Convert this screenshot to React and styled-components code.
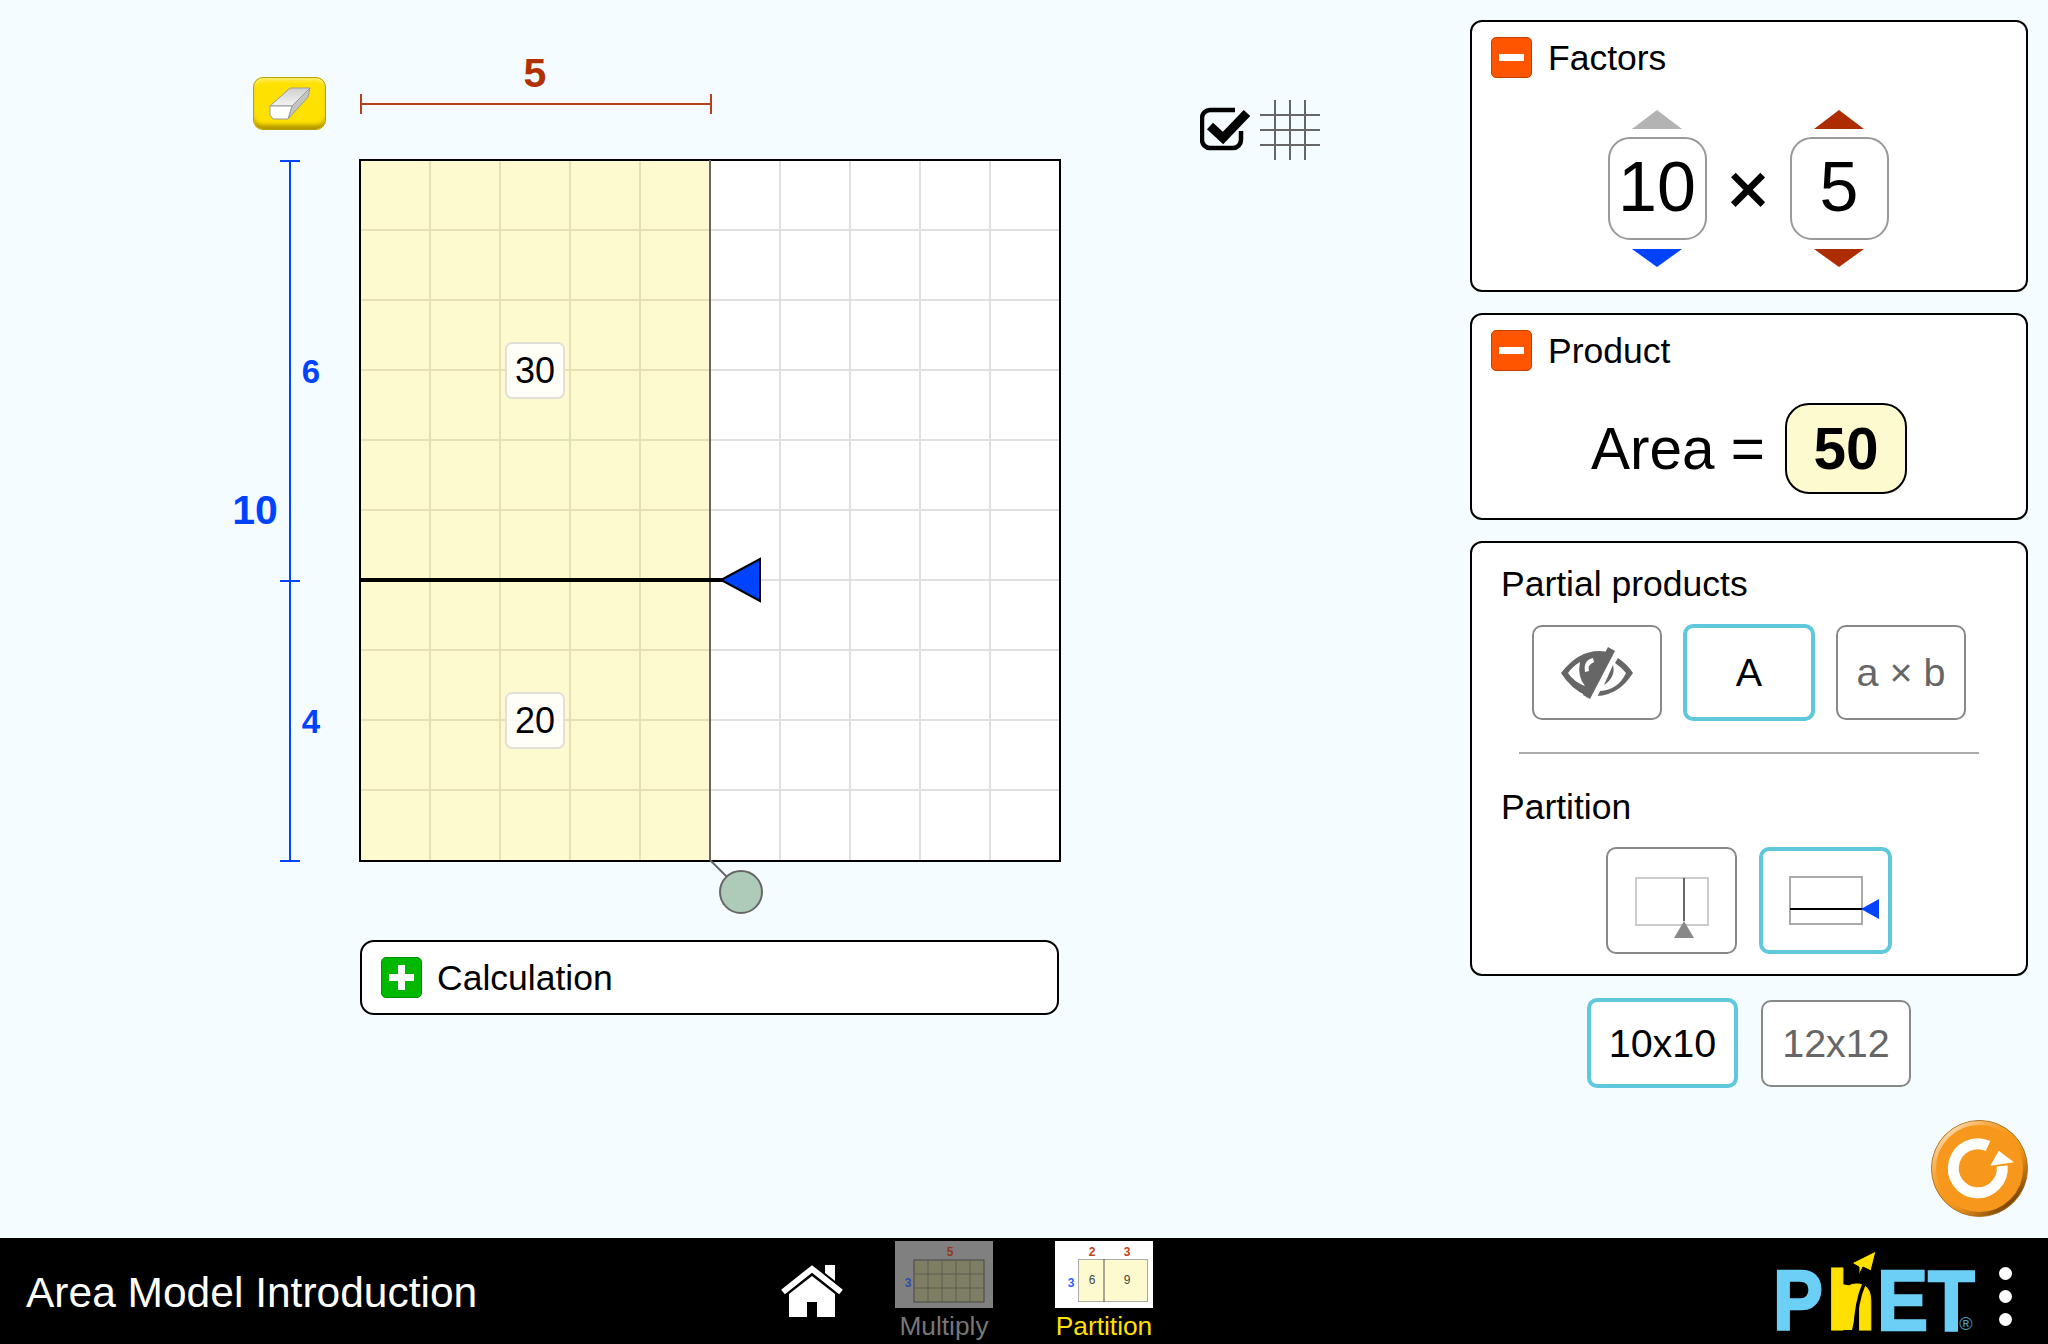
import React from 'react';
import styled, { createGlobalStyle } from 'styled-components';

const GlobalStyle = createGlobalStyle`
  html, body { margin: 0; padding: 0; background: #f4fcff; }
  body { font-family: "Liberation Sans", Arial, sans-serif; color: #000; }
  * { box-sizing: border-box; }
`;

const Screen = styled.div`
  width: 2048px;
  height: 1344px;
  display: flex;
  flex-direction: column;
  overflow: hidden;
`;

const Stage = styled.main`
  height: 1238px;
  flex: none;
  display: flex;
  background: #f4fcff;
`;

/* ---- area model ---- */

const ModelArea = styled.section`
  flex: none;
  display: grid;
  grid-template-columns: 360px 700px;
  grid-template-rows: 160px 701px auto;
`;

const EraserCell = styled.div`
  padding: 77px 0 0 253px;
`;

const EraserButton = styled.button`
  display: block;
  width: 73px;
  height: 53px;
  padding: 0;
  border: 1px solid #b9a100;
  border-radius: 10px;
  background: #ffe100;
  box-shadow: inset 0 -6px 4px -2px rgba(110, 85, 0, 0.55), inset 0 4px 4px -2px rgba(255, 255, 255, 0.55);
  svg { display: block; }
`;

const WidthCell = styled.div`
  display: flex;
  flex-direction: column;
  justify-content: flex-end;
  padding-bottom: 46px;
`;

const WidthLabel = styled.div`
  width: 350px;
  margin-bottom: 1px;
  text-align: center;
  font-size: 41px;
  line-height: 40px;
  font-weight: bold;
  color: #b03000;
`;

const WidthTrack = styled.div`
  position: relative;
  width: 352px;
  height: 20px;
  background: linear-gradient(#b93e1a, #b93e1a) 0 9px / 100% 2px no-repeat;
  &::before, &::after {
    content: "";
    position: absolute;
    top: 0;
    width: 2px;
    height: 20px;
    background: #b93e1a;
  }
  &::before { left: 0; }
  &::after { right: 0; }
`;

const HeightCell = styled.div`
  display: flex;
  align-items: center;
  padding-left: 230px;
`;

const TotalLabel = styled.div`
  width: 50px;
  text-align: center;
  font-size: 41px;
  font-weight: bold;
  color: #0043ff;
`;

const HeightTrack = styled.div`
  position: relative;
  width: 42px;
  height: 702px;
  margin-top: 1px;
  background: linear-gradient(#0043ff, #0043ff) 9px 0 / 2px 100% no-repeat;
  &::after {
    content: "";
    position: absolute;
    left: 0;
    bottom: 0;
    width: 20px;
    height: 2px;
    background: #0043ff;
  }
`;

const HeightSegment = styled.div`
  position: relative;
  height: ${p => p.$size}px;
  display: flex;
  align-items: center;
  padding: 3px 0 0 20px;
  font-size: 33px;
  font-weight: bold;
  color: #0043ff;
  &::before {
    content: "";
    position: absolute;
    left: 0;
    top: 0;
    width: 20px;
    height: 2px;
    background: #0043ff;
  }
`;

const SegmentValue = styled.span`
  width: 22px;
  text-align: center;
`;

const Board = styled.div`
  position: relative;
  width: 700px;
  height: 701px;
  display: grid;
  grid-template-columns: 71px repeat(8, 70px) 69px;
  grid-template-rows: 71px repeat(8, 70px) 70px;
  background: #fff;
  outline: 2px solid #000;
  outline-offset: -1px;
`;

const Cell = styled.div`
  background: ${p => (p.$shaded ? '#fdfacf' : '#fff')};
  border-right: ${p => (p.$lastCol ? 'none' : `2px solid ${p.$shaded ? '#e6e0b4' : '#e0e0e0'}`)};
  border-bottom: ${p => (p.$lastRow ? 'none' : `2px solid ${p.$shaded ? '#e6e0b4' : '#e0e0e0'}`)};
`;

const ColumnEdge = styled.div`
  position: absolute;
  left: 349px;
  top: 0;
  width: 2px;
  height: 700px;
  background: #666;
`;

const RowLine = styled.div`
  position: absolute;
  left: 0;
  top: 418px;
  width: 364px;
  height: 4px;
  background: #000;
`;

const ArrowHandle = styled.svg`
  position: absolute;
  left: 359px;
  top: 396px;
`;

const KnobHandle = styled.svg`
  position: absolute;
  left: 348px;
  top: 698px;
  overflow: visible;
`;

const PartialBadge = styled.div`
  position: absolute;
  left: 145px;
  top: ${p => p.$top}px;
  width: 60px;
  height: 57px;
  display: flex;
  align-items: center;
  justify-content: center;
  border: 2px solid #e0e0d8;
  border-radius: 7px;
  background: rgba(255, 255, 255, 0.85);
  font-size: 36px;
`;

const CalculationPanel = styled.div`
  width: 699px;
  height: 75px;
  margin-top: 79px;
  display: flex;
  align-items: center;
  gap: 15px;
  padding-left: 19px;
  border: 2px solid #000;
  border-radius: 14px;
  background: #fff;
`;

const GridToggle = styled.div`
  flex: none;
  display: flex;
  align-items: flex-start;
  gap: 8px;
  margin: 100px 0 0 140px;
  height: 60px;
`;

const CheckIcon = styled.svg`
  margin-top: 7px;
`;

/* ---- right column ---- */

const SideColumn = styled.aside`
  flex: none;
  width: 558px;
  margin-left: 150px;
  padding-top: 20px;
  display: flex;
  flex-direction: column;
`;

const Panel = styled.section`
  height: ${p => p.$height}px;
  margin-bottom: ${p => p.$gap || 0}px;
  display: flex;
  flex-direction: column;
  padding: ${p => p.$padding || '15px 0 0 19px'};
  border: 2px solid #000;
  border-radius: 12px;
  background: #fff;
`;

const PanelHeader = styled.header`
  display: flex;
  align-items: center;
  gap: 16px;
`;

const Heading = styled.div`
  font-size: 35.5px;
  line-height: 40px;
`;

const SubHeading = styled(Heading)`
  margin-top: 33px;
`;

const ExpandButton = styled.div`
  position: relative;
  flex: none;
  width: 41px;
  height: 41px;
  border: 1px solid ${p => (p.$plus ? '#008f00' : '#c24000')};
  border-radius: 5px;
  background: ${p => (p.$plus ? '#00b800' : '#ff5500')};
  &::before {
    content: "";
    position: absolute;
    left: 7px;
    top: 16px;
    width: 25px;
    height: 7px;
    background: #fff;
  }
  &::after {
    content: "";
    display: ${p => (p.$plus ? 'block' : 'none')};
    position: absolute;
    left: 16px;
    top: 7px;
    width: 7px;
    height: 25px;
    background: #fff;
  }
`;

const SpinnerRow = styled.div`
  display: flex;
  justify-content: center;
  margin: 32px 0 0 -21px;
`;

const Spinner = styled.div`
  display: flex;
  flex-direction: column;
  align-items: center;
`;

const Arrow = styled.div`
  width: 0;
  height: 0;
  border-left: 25px solid transparent;
  border-right: 25px solid transparent;
  ${p => (p.$down
    ? `border-top: 18px solid ${p.$color}; margin-top: 9px;`
    : `border-bottom: 19px solid ${p.$color}; margin-bottom: 8px;`)}
`;

const SpinnerValue = styled.div`
  width: 99px;
  height: 103px;
  display: flex;
  align-items: center;
  justify-content: center;
  padding-bottom: 3px;
  border: 2px solid #999;
  border-radius: 22px;
  background: #fff;
  font-size: 70px;
`;

const TimesSign = styled.div`
  width: 83px;
  align-self: center;
  text-align: center;
  font-size: 72px;
  -webkit-text-stroke: 1.5px #000;
  line-height: 1;
`;

const ProductRow = styled.div`
  display: flex;
  align-items: center;
  justify-content: center;
  gap: 20px;
  margin: 32px 0 0 -19px;
  font-size: 58.5px;
`;

const AreaValue = styled.div`
  width: 122px;
  height: 91px;
  display: flex;
  align-items: center;
  justify-content: center;
  border: 2px solid #000;
  border-radius: 24px;
  background: #fdfacf;
  font-weight: bold;
`;

const OptionRow = styled.div`
  display: flex;
  align-items: center;
  justify-content: center;
  gap: ${p => p.$gap}px;
  margin: ${p => p.$margin};
`;

const OptionButton = styled.button`
  flex: none;
  width: ${p => p.$width}px;
  height: ${p => p.$height}px;
  padding: 0;
  display: flex;
  align-items: center;
  justify-content: center;
  border: ${p => (p.$selected ? '4px solid #5fc8da' : '2px solid #888')};
  border-radius: 10px;
  background: #fff;
  color: ${p => (p.$selected ? '#000' : '#666')};
  font-family: inherit;
  font-size: 39.5px;
  svg { display: block; }
`;

const PanelDivider = styled.div`
  width: 460px;
  height: 2px;
  margin: 31px 0 0 18px;
  background: #aaa;
`;

const ResetButton = styled.svg`
  display: block;
  align-self: flex-end;
  margin-top: 32px;
`;

/* ---- nav bar ---- */

const NavBar = styled.nav`
  height: 106px;
  flex: none;
  display: flex;
  align-items: flex-start;
  background: #000;
`;

const SimTitle = styled.div`
  flex: none;
  width: 780px;
  padding: 33px 0 0 26px;
  font-size: 42.5px;
  line-height: 44px;
  color: #fff;
`;

const HomeIcon = styled.svg`
  flex: none;
  margin: 27px 51px 0 0;
`;

const ScreenTab = styled.div`
  flex: none;
  width: 98px;
  margin-right: ${p => p.$gap}px;
  padding-top: 3px;
  display: flex;
  flex-direction: column;
  align-items: center;
  svg { display: block; }
`;

const TabLabel = styled.div`
  margin-top: 4px;
  white-space: nowrap;
  font-size: 26.3px;
  line-height: 28px;
  color: ${p => (p.$active ? '#ffe000' : '#777')};
`;

const LogoMark = styled.svg`
  flex: none;
  margin-top: 2px;
`;

const MenuDots = styled.div`
  flex: none;
  margin: 29px 0 0 20px;
  display: flex;
  flex-direction: column;
  gap: 10px;
`;

const Dot = styled.div`
  width: 13px;
  height: 13px;
  border-radius: 50%;
  background: #fff;
`;

/* ---- drawings ---- */

const EraserIcon = () => (
  <svg width="71" height="51" viewBox="1 1 71 51">
    <defs>
      <linearGradient id="eraserTop" x1="0" y1="0" x2="0" y2="1">
        <stop offset="0" stopColor="#cfcfcf" />
        <stop offset="1" stopColor="#f4f4f4" />
      </linearGradient>
    </defs>
    <polygon points="57,11 55,20 35,42 39,29" fill="#c4c4c4" stroke="#999" strokeWidth="1" />
    <polygon points="37,11 57,11 39,29 17,29" fill="url(#eraserTop)" stroke="#999" strokeWidth="1" />
    <polygon points="17,29 39,29 35,42 20,42 17,38" fill="#fff" stroke="#999" strokeWidth="1" />
  </svg>
);

const EyeSlash = () => (
  <svg width="72" height="54" viewBox="0 0 72 54">
    <path d="M0 27 Q17 5 38 5 Q44 5 50 7 L26 50 Q10 43 0 27 Z" fill="#666" />
    <path d="M7 27 Q12 20 19 16 Q16 30 24 40 Q13 36 7 27 Z" fill="#fff" />
    <path d="M32 12 Q22 14 24 26 L28 25 Q26 19 33 16 Z" fill="#fff" />
    <path d="M57 12 Q66 18 72 27 Q58 49 36 50 L39 45 Q57 44 65 27 Q60 21 54 17 Z" fill="#666" />
    <path d="M52 19 Q55 31 43 39 Z" fill="#666" />
    <line x1="57" y1="3" x2="33" y2="53" stroke="#fff" strokeWidth="4" />
    <polygon points="47,1 54,5 29,53 22,49" fill="#666" />
  </svg>
);

const CutVertical = () => (
  <svg width="74" height="100" viewBox="0 0 74 100">
    <rect x="1" y="27" width="72" height="47" fill="none" stroke="#ccc" strokeWidth="2" />
    <line x1="49" y1="27" x2="49" y2="70" stroke="#666" strokeWidth="2" />
    <polygon points="49,70 59,87 39,87" fill="#888" />
  </svg>
);

const CutHorizontal = () => (
  <svg width="92" height="50" viewBox="0 0 92 50" style={{ marginLeft: 18 }}>
    <rect x="1" y="1" width="72" height="47" fill="none" stroke="#aaa" strokeWidth="2" />
    <line x1="1" y1="33" x2="74" y2="33" stroke="#000" strokeWidth="2" />
    <polygon points="72,33 90,23 90,43" fill="#0043ff" />
  </svg>
);

const ResetIcon = () => (
  <ResetButton width="97" height="97" viewBox="0 0 97 97">
    <defs>
      <linearGradient id="resetEdge" x1="0.15" y1="0.1" x2="0.85" y2="0.9">
        <stop offset="0" stopColor="#fff" stopOpacity="0.6" />
        <stop offset="0.5" stopColor="#f7981d" stopOpacity="0" />
        <stop offset="1" stopColor="#5a3200" stopOpacity="0.85" />
      </linearGradient>
    </defs>
    <circle cx="48.5" cy="48.5" r="48" fill="#f7981d" stroke="#a9701f" strokeWidth="1" />
    <circle cx="48.5" cy="48.5" r="45.5" fill="none" stroke="url(#resetEdge)" strokeWidth="4" />
    <path d="M57 26 A24.5 24.5 0 1 0 71.2 46" fill="none" stroke="#fff" strokeWidth="11" />
    <polygon points="83,42.3 67.7,30.7 59.3,45.7" fill="#fff" />
  </ResetButton>
);

const Home = () => (
  <HomeIcon width="64" height="53" viewBox="0 0 64 53">
    <polygon points="45,0 55,0 55,20 45,13" fill="#fff" />
    <path d="M3 27 L32 4 L61 27" fill="none" stroke="#000" strokeWidth="10" />
    <path d="M3 27 L32 4 L61 27" fill="none" stroke="#fff" strokeWidth="6" />
    <path d="M9 29 L32 11 L55 29 V52 H37 V37 H27 V52 H9 Z" fill="#fff" />
  </HomeIcon>
);

const MultiplyThumb = () => (
  <svg width="98" height="67" viewBox="0 0 98 67" fontFamily="Liberation Sans" fontWeight="bold">
    <rect width="98" height="67" fill="#808080" />
    <text x="55" y="15" fontSize="12" textAnchor="middle" fill="#94391c">5</text>
    <text x="13" y="46" fontSize="12" textAnchor="middle" fill="#2a4bb0">3</text>
    <rect x="19" y="19" width="70" height="42" fill="#7e7e64" stroke="#444" strokeWidth="1" />
    {[33, 47, 61, 75].map(x => <line key={x} x1={x} y1="19" x2={x} y2="61" stroke="#5c5c50" />)}
    {[33, 47].map(y => <line key={y} x1="19" y1={y} x2="89" y2={y} stroke="#5c5c50" />)}
  </svg>
);

const PartitionThumb = () => (
  <svg width="98" height="67" viewBox="0 0 98 67" fontFamily="Liberation Sans">
    <rect width="98" height="67" fill="#fff" />
    <text x="37" y="15" fontSize="12" fontWeight="bold" textAnchor="middle" fill="#c8401a">2</text>
    <text x="72" y="15" fontSize="12" fontWeight="bold" textAnchor="middle" fill="#c8401a">3</text>
    <text x="16" y="46" fontSize="12" fontWeight="bold" textAnchor="middle" fill="#2a62ff">3</text>
    <rect x="23.5" y="18.5" width="69" height="42" fill="#fdfacf" stroke="#aaa" />
    <line x1="49" y1="18" x2="49" y2="61" stroke="#555" />
    <text x="37" y="43" fontSize="12" textAnchor="middle" fill="#444">6</text>
    <text x="72" y="43" fontSize="12" textAnchor="middle" fill="#444">9</text>
  </svg>
);

const PhetLogo = () => (
  <LogoMark width="205" height="104" viewBox="0 -4 205 104" fontFamily="Liberation Sans" fontWeight="bold" fontSize="85">
    <text transform="translate(-1 86) scale(0.88 1)" fill="#6bcff6" stroke="#6bcff6" strokeWidth="2.5">P</text>
    <text transform="translate(52 86) scale(0.96 1)" fill="#ffe000" stroke="#ffe000" strokeWidth="1">h</text>
    <polygon points="68,86 78,86 88,44 68,40" fill="#ffe000" />
    <path d="M90 40 Q82 58 81 87" fill="none" stroke="#000" strokeWidth="3.5" />
    <text transform="translate(103 86) scale(0.9 1)" fill="#6bcff6" stroke="#6bcff6" strokeWidth="2.5">ET</text>
    <polygon points="78,19 102,7 97,27 89,23 85,31 85,23" fill="#ffe000" stroke="#000" strokeWidth="1" />
    <text x="192" y="86" fill="#4a9cc0" fontSize="18" fontWeight="normal" textAnchor="middle">®</text>
  </LogoMark>
);

const rows = Array.from({ length: 10 }, (_, i) => i);

const App = () => (
  <Screen>
    <GlobalStyle />
    <Stage>
      <ModelArea>
        <EraserCell>
          <EraserButton aria-label="Erase"><EraserIcon /></EraserButton>
        </EraserCell>
        <WidthCell>
          <WidthLabel>5</WidthLabel>
          <WidthTrack />
        </WidthCell>
        <HeightCell>
          <TotalLabel>10</TotalLabel>
          <HeightTrack>
            <HeightSegment $size={420}><SegmentValue>6</SegmentValue></HeightSegment>
            <HeightSegment $size={280}><SegmentValue>4</SegmentValue></HeightSegment>
          </HeightTrack>
        </HeightCell>
        <Board>
          {rows.map(r => rows.map(c => (
            <Cell key={`${r}-${c}`} $shaded={c < 5} $lastCol={c === 9} $lastRow={r === 9} />
          )))}
          <ColumnEdge />
          <RowLine />
          <PartialBadge $top={182}>30</PartialBadge>
          <PartialBadge $top={532}>20</PartialBadge>
          <ArrowHandle width="44" height="48" viewBox="0 0 44 48">
            <polygon points="2,24 41,3 41,45" fill="#0043ff" stroke="#000" strokeWidth="2" />
          </ArrowHandle>
          <KnobHandle width="70" height="70" viewBox="0 0 70 70">
            <line x1="2" y1="2" x2="20" y2="20" stroke="#666" strokeWidth="2" />
            <circle cx="33" cy="34" r="21" fill="#aecab8" stroke="#666" strokeWidth="2" />
          </KnobHandle>
        </Board>
        <div />
        <CalculationPanel>
          <ExpandButton $plus />
          <Heading>Calculation</Heading>
        </CalculationPanel>
      </ModelArea>

      <GridToggle>
        <CheckIcon width="52" height="44" viewBox="0 0 52 44">
          <path d="M35 3 H10 a8 8 0 0 0 -8 8 V33 a8 8 0 0 0 8 8 H33 a8 8 0 0 0 8 -8 V24" fill="none" stroke="#000" strokeWidth="4.5" />
          <path d="M10 19 L23 31 L47 6" fill="none" stroke="#000" strokeWidth="9" />
        </CheckIcon>
        <svg width="60" height="60" viewBox="0 0 60 60" stroke="#666" strokeWidth="2">
          {[15, 30, 45].map(p => <line key={`v${p}`} x1={p} y1="0" x2={p} y2="60" />)}
          {[15, 30, 45].map(p => <line key={`h${p}`} x1="0" y1={p} x2="60" y2={p} />)}
        </svg>
      </GridToggle>

      <SideColumn>
        <Panel $height={272} $gap={21}>
          <PanelHeader>
            <ExpandButton />
            <Heading>Factors</Heading>
          </PanelHeader>
          <SpinnerRow>
            <Spinner>
              <Arrow $color="#b3b3b3" />
              <SpinnerValue>10</SpinnerValue>
              <Arrow $down $color="#0043ff" />
            </Spinner>
            <TimesSign>×</TimesSign>
            <Spinner>
              <Arrow $color="#ad2d00" />
              <SpinnerValue>5</SpinnerValue>
              <Arrow $down $color="#ad2d00" />
            </Spinner>
          </SpinnerRow>
        </Panel>

        <Panel $height={207} $gap={21}>
          <PanelHeader>
            <ExpandButton />
            <Heading>Product</Heading>
          </PanelHeader>
          <ProductRow>
            <span>Area =</span>
            <AreaValue>50</AreaValue>
          </ProductRow>
        </Panel>

        <Panel $height={435} $padding="21px 0 0 29px">
          <Heading>Partial products</Heading>
          <OptionRow $gap={21} $margin="20px 0 0 -29px">
            <OptionButton $width={130} $height={95}><EyeSlash /></OptionButton>
            <OptionButton $selected $width={132} $height={97}>A</OptionButton>
            <OptionButton $width={130} $height={95}>a × b</OptionButton>
          </OptionRow>
          <PanelDivider />
          <SubHeading>Partition</SubHeading>
          <OptionRow $gap={22} $margin="20px 0 0 -29px">
            <OptionButton $width={131} $height={107}><CutVertical /></OptionButton>
            <OptionButton $selected $width={133} $height={107}><CutHorizontal /></OptionButton>
          </OptionRow>
        </Panel>

        <OptionRow $gap={23} $margin="22px 0 0 0">
          <OptionButton $selected $width={151} $height={90}>10x10</OptionButton>
          <OptionButton $width={150} $height={87}>12x12</OptionButton>
        </OptionRow>

        <ResetIcon />
      </SideColumn>
    </Stage>

    <NavBar>
      <SimTitle>Area Model Introduction</SimTitle>
      <Home />
      <ScreenTab $gap={62}>
        <MultiplyThumb />
        <TabLabel>Multiply</TabLabel>
      </ScreenTab>
      <ScreenTab $gap={621}>
        <PartitionThumb />
        <TabLabel $active>Partition</TabLabel>
      </ScreenTab>
      <PhetLogo />
      <MenuDots>
        <Dot />
        <Dot />
        <Dot />
      </MenuDots>
    </NavBar>
  </Screen>
);

export default App;
